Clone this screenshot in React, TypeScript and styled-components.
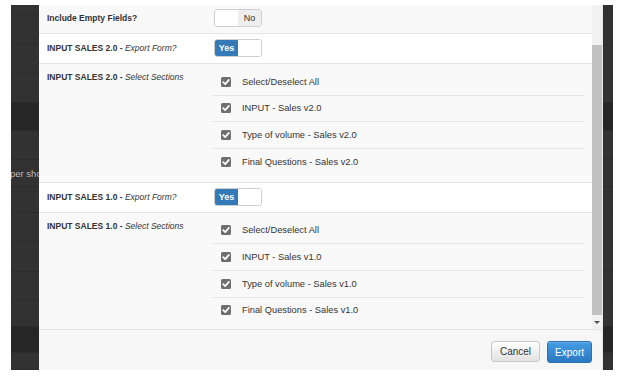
import React from "react";
import styled, { createGlobalStyle } from "styled-components";

type Section = { name: string; version: string };

const sections: Section[] = [
  { name: "INPUT SALES 2.0", version: "v2.0" },
  { name: "INPUT SALES 1.0", version: "v1.0" },
];

const backdropRows = [
  { h: 10 },
  { h: 30 },
  { h: 29 },
  { h: 29 },
  { h: 28, dark: true },
  { h: 29 },
  { h: 27, text: "per shop" },
  { h: 26 },
  { h: 29 },
  { h: 30 },
  { h: 28 },
  { h: 27 },
  { h: 26, dark: true },
  { h: 17 },
];

const GlobalStyle = createGlobalStyle`
  html, body {
    margin: 0;
    padding: 0;
    background: #fff;
  }
  body {
    font-family: "Liberation Sans", Arial, Helvetica, sans-serif;
    color: #333;
  }
  * {
    box-sizing: border-box;
  }
`;

const CheckIcon: React.FC = () => (
  <svg width="10" height="10" viewBox="0 0 10 10">
    <rect x="0" y="0" width="10" height="10" rx="1.5" fill="#6f6f6f" />
    <path
      d="M2.2 5.1 L4.2 7.1 L7.9 2.9"
      fill="none"
      stroke="#fff"
      strokeWidth="1.7"
      strokeLinecap="round"
      strokeLinejoin="round"
    />
  </svg>
);

const Switch: React.FC<{ on: boolean }> = ({ on }) => (
  <SwitchBox>
    {on ? (
      <>
        <SwitchOn>Yes</SwitchOn>
        <SwitchHandle />
      </>
    ) : (
      <>
        <SwitchHandle />
        <SwitchOff>No</SwitchOff>
      </>
    )}
  </SwitchBox>
);

const SectionList: React.FC<{ version: string }> = ({ version }) => {
  const items = [
    "Select/Deselect All",
    `INPUT - Sales ${version}`,
    `Type of volume - Sales ${version}`,
    `Final Questions - Sales ${version}`,
  ];
  return (
    <List>
      {items.map((item) => (
        <Item key={item}>
          <CheckIcon />
          <span>{item}</span>
        </Item>
      ))}
    </List>
  );
};

const App: React.FC = () => (
  <Page>
    <GlobalStyle />
    <Frame>
      <Backdrop>
        {backdropRows.map((row, i) => (
          <BgRow key={i} $h={row.h} $dark={row.dark}>
            {row.text}
          </BgRow>
        ))}
      </Backdrop>
      <Modal>
        <Body>
          <Content>
            <FormRow $tone="gray" $pt={4}>
              <Label>Include Empty Fields?</Label>
              <Switch on={false} />
            </FormRow>
            {sections.map((s) => (
              <React.Fragment key={s.name}>
                <FormRow $tone="white" $pt={5}>
                  <Label>
                    {s.name} - <Em>Export Form?</Em>
                  </Label>
                  <Switch on />
                </FormRow>
                <FormRow $tone="gray" $pt={5} $top>
                  <Label $offset>
                    {s.name} - <Em>Select Sections</Em>
                  </Label>
                  <SectionList version={s.version} />
                </FormRow>
              </React.Fragment>
            ))}
          </Content>
          <ScrollTrack>
            <ThumbGap $h={40} />
            <Thumb />
            <ScrollArrow />
          </ScrollTrack>
        </Body>
        <Footer>
          <Button>Cancel</Button>
          <Button $primary>Export</Button>
        </Footer>
      </Modal>
    </Frame>
  </Page>
);

const Page = styled.div`
  width: 620px;
  height: 381px;
  padding: 5px 7px 11px 11px;
  background: #fff;
`;

const Frame = styled.div`
  position: relative;
  width: 602px;
  height: 365px;
  background: #333;
  overflow: hidden;
`;

const Backdrop = styled.div`
  display: flex;
  flex-direction: column;
`;

const BgRow = styled.div<{ $h: number; $dark?: boolean }>`
  height: ${(p) => p.$h}px;
  flex: none;
  background: ${(p) => (p.$dark ? "#262626" : "#323232")};
  border-bottom: 1px solid #2b2b2b;
  color: #bdbdbd;
  font-size: 9.5px;
  line-height: ${(p) => p.$h}px;
  text-indent: -1px;
  white-space: nowrap;
`;

const Modal = styled.div`
  position: absolute;
  top: 0;
  bottom: 0;
  left: 28px;
  right: 10px;
  display: flex;
  flex-direction: column;
  background: #fff;
  border-right: 1px solid #e8e8e8;
`;

const Body = styled.div`
  display: flex;
  height: 324px;
  flex: none;
  overflow: hidden;
`;

const Content = styled.div`
  flex: 1;
  display: flex;
  flex-direction: column;
  overflow: hidden;
`;

const FormRow = styled.div<{ $tone: "gray" | "white"; $pt: number; $top?: boolean }>`
  display: grid;
  grid-template-columns: 166px 1fr;
  align-items: ${(p) => (p.$top ? "start" : "center")};
  padding: ${(p) => p.$pt}px 8px 6px 8px;
  background: ${(p) => (p.$tone === "gray" ? "#f9f9f9" : "#fff")};
  border-bottom: 1px solid #e4e4e4;
  flex: none;
`;

const Label = styled.div<{ $offset?: boolean }>`
  font-size: 8.5px;
  font-weight: bold;
  line-height: 12px;
  color: #333;
  margin-top: ${(p) => (p.$offset ? 2 : 0)}px;
  white-space: nowrap;
`;

const Em = styled.em`
  font-weight: normal;
  font-style: italic;
`;

const SwitchBox = styled.div`
  display: flex;
  width: 48px;
  height: 18px;
  margin-left: 1px;
  border: 1px solid #cfcfcf;
  border-radius: 3px;
  overflow: hidden;
  background: #fff;
`;

const SwitchOn = styled.div`
  width: 23px;
  display: flex;
  align-items: center;
  justify-content: center;
  background: #337ab7;
  color: #fff;
  font-size: 9px;
  font-weight: bold;
`;

const SwitchOff = styled.div`
  width: 23px;
  display: flex;
  align-items: center;
  justify-content: center;
  background: #eee;
  color: #333;
  font-size: 9px;
`;

const SwitchHandle = styled.div`
  flex: 1;
  background: #fff;
`;

const List = styled.div`
  display: flex;
  flex-direction: column;
`;

const Item = styled.div`
  display: flex;
  align-items: center;
  gap: 11px;
  height: 26.67px;
  padding-left: 8px;
  border-bottom: 1px solid #e3e3e3;
  font-size: 9.3px;
  color: #333;

  &:last-child {
    border-bottom-color: transparent;
  }
`;

const ScrollTrack = styled.div`
  width: 10px;
  flex: none;
  display: flex;
  flex-direction: column;
  background: #f1f1f1;
`;

const ThumbGap = styled.div<{ $h: number }>`
  height: ${(p) => p.$h}px;
  flex: none;
`;

const Thumb = styled.div`
  height: 270px;
  flex: none;
  background: #c1c1c1;
`;

const ScrollArrow = styled.div`
  margin: 6px auto 0;
  width: 0;
  height: 0;
  border-left: 3px solid transparent;
  border-right: 3px solid transparent;
  border-top: 3px solid #505050;
`;

const Footer = styled.div`
  flex: 1;
  display: flex;
  justify-content: flex-end;
  align-items: flex-start;
  gap: 7px;
  padding: 11px 10px 0 0;
  background: #f6f6f6;
  border-top: 1px solid #e3e3e3;
`;

const Button = styled.button<{ $primary?: boolean }>`
  height: ${(p) => (p.$primary ? 22 : 21)}px;
  padding: 0 ${(p) => (p.$primary ? 7 : 8)}px;
  font-family: "Liberation Sans", Arial, sans-serif;
  font-size: 10px;
  border-radius: 3px;
  cursor: pointer;
  color: ${(p) => (p.$primary ? "#fff" : "#333")};
  border: 1px solid ${(p) => (p.$primary ? "#2a6fb2" : "#c8c8c8")};
  background: ${(p) =>
    p.$primary
      ? "linear-gradient(#459de2, #2a79c3)"
      : "linear-gradient(#ffffff, #e2e2e2)"};
  box-shadow: inset 0 1px 0 rgba(255, 255, 255, 0.2);
`;

export default App;
